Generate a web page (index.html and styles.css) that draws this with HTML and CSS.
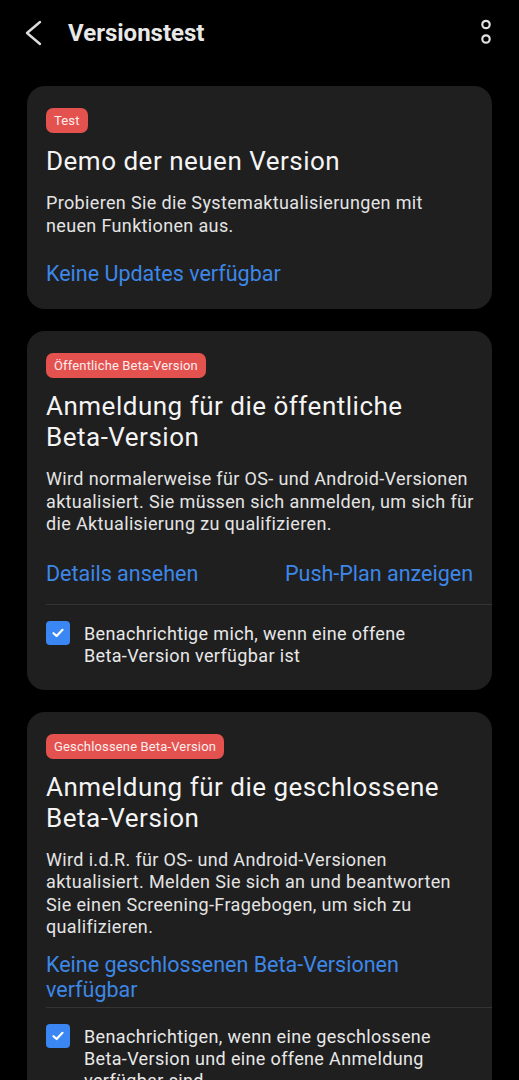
FILE: index.html
```html
<!DOCTYPE html>
<html lang="de">
<head>
  <meta charset="UTF-8">
  <meta name="viewport" content="width=device-width, initial-scale=1.0">
  <title>Versionstest</title>
  <link rel="stylesheet" href="styles.css">
</head>
<body>
  <header class="topbar">
    <svg class="back" width="18" height="26" viewBox="0 0 18 26"><path d="M15 2 L2 13 L15 24" fill="none" stroke="#dcdcdc" stroke-width="2.4" stroke-linecap="round" stroke-linejoin="round"/></svg>
    <h1 class="title">Versionstest</h1>
    <svg class="more" width="20" height="30" viewBox="0 0 20 30"><circle cx="10" cy="6.5" r="3.7" fill="none" stroke="#e0e0e0" stroke-width="2.2"/><circle cx="10" cy="21" r="3.7" fill="none" stroke="#e0e0e0" stroke-width="2.2"/></svg>
  </header>

  <main class="list">
    <section class="card">
      <span class="badge">Test</span>
      <h2 class="card-title">Demo der neuen Version</h2>
      <p class="desc">Probieren Sie die Systemaktualisierungen mit<br>neuen Funktionen aus.</p>
      <div class="links first">
        <a class="link">Keine Updates verfügbar</a>
      </div>
    </section>

    <section class="card">
      <span class="badge">Öffentliche Beta-Version</span>
      <h2 class="card-title">Anmeldung für die öffentliche<br>Beta-Version</h2>
      <p class="desc">Wird normalerweise für OS- und Android-Versionen<br>aktualisiert. Sie müssen sich anmelden, um sich für<br>die Aktualisierung zu qualifizieren.</p>
      <div class="links two">
        <a class="link">Details ansehen</a>
        <a class="link">Push-Plan anzeigen</a>
      </div>
      <div class="divider"></div>
      <label class="check-row">
        <span class="box"><svg width="14" height="14" viewBox="0 0 14 14"><path d="M2.5 7.2 L5.6 10 L11.5 3.8" fill="none" stroke="#fff" stroke-width="2.2" stroke-linecap="round" stroke-linejoin="round"/></svg></span>
        <span class="check-text">Benachrichtige mich, wenn eine offene<br>Beta-Version verfügbar ist</span>
      </label>
    </section>

    <section class="card">
      <span class="badge">Geschlossene Beta-Version</span>
      <h2 class="card-title">Anmeldung für die geschlossene<br>Beta-Version</h2>
      <p class="desc">Wird i.d.R. für OS- und Android-Versionen<br>aktualisiert. Melden Sie sich an und beantworten<br>Sie einen Screening-Fragebogen, um sich zu<br>qualifizieren.</p>
      <div class="links tight">
        <a class="link">Keine geschlossenen Beta-Versionen<br>verfügbar</a>
      </div>
      <div class="divider near"></div>
      <label class="check-row">
        <span class="box"><svg width="14" height="14" viewBox="0 0 14 14"><path d="M2.5 7.2 L5.6 10 L11.5 3.8" fill="none" stroke="#fff" stroke-width="2.2" stroke-linecap="round" stroke-linejoin="round"/></svg></span>
        <span class="check-text">Benachrichtigen, wenn eine geschlossene<br>Beta-Version und eine offene Anmeldung<br>verfügbar sind.</span>
      </label>
    </section>
  </main>
</body>
</html>
```

FILE: styles.css
```css
body { margin: 0; background: #000; font-family: Roboto, "Noto Sans", sans-serif; color: #f2f2f2; }
.topbar { display: flex; align-items: center; height: 66px; padding: 0 23px 0 25px; }
.back { flex: none; }
.title { flex: 1; margin: 0 0 0 25px; font-size: 24px; line-height: 28px; font-weight: 700; color: #e8e8e8; }
.more { flex: none; }
.list { display: flex; flex-direction: column; gap: 22px; padding: 20px 27px 40px; }
.card { background: #1f1f1f; border-radius: 18px; padding: 22px 0 23px 19px; }
.badge { display: inline-block; background: #e4524f; color: #fdeeee; font-size: 13px; letter-spacing: 0.15px; line-height: 25px; padding: 0 8px; border-radius: 7px; }
.card-title { margin: 13px 0 0; font-size: 26px; letter-spacing: 0.5px; line-height: 31px; font-weight: 400; color: #f4f4f4; white-space: nowrap; }
.desc { margin: 15px 0 0; font-size: 18px; letter-spacing: 0.35px; line-height: 22.5px; color: #e4e4e4; white-space: nowrap; }
.links { display: flex; justify-content: space-between; padding-right: 19px; }
.links.first { margin-top: 24px; }
.links.two { margin-top: 25px; }
.links.tight { margin-top: 13px; }
.link { font-size: 21.5px; line-height: 25px; color: #3d87e8; }
.divider { height: 1px; background: #343434; margin-top: 18px; }
.divider.near { margin-top: 5px; }
.check-row { display: flex; align-items: flex-start; gap: 14px; padding: 16px 0 0 0; }
.box { flex: none; width: 24px; height: 24px; border-radius: 4px; background: #3a86f2; display: flex; align-items: center; justify-content: center; }
.check-text { margin-top: 2px; font-size: 18px; letter-spacing: 0.35px; line-height: 22px; color: #e8e8e8; white-space: nowrap; }
```
